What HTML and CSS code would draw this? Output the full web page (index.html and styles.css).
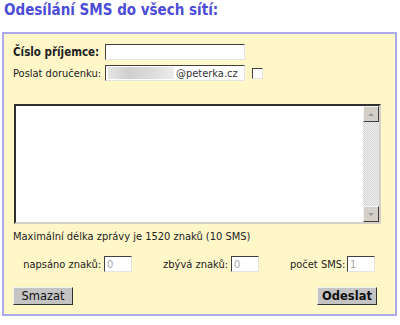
FILE: index.html
```html
<!DOCTYPE html>
<html lang="cs">
<head>
    <meta charset="UTF-8">
    <title>Odesílání SMS</title>
    <link rel="stylesheet" href="styles.css">
</head>
<body>
    <h1 class="title">Odesílání SMS do všech sítí:</h1>
    <div class="sms-box">
        <div class="field-row">
            <label class="label-strong" for="cislo">Číslo příjemce:</label>
            <input class="text-input" type="text" id="cislo">
        </div>
        <div class="field-row">
            <label for="dorucenka">Poslat doručenku:</label>
            <div class="text-input email-input">
                <span class="email-blur"></span>
                <span class="email-domain">@peterka.cz</span>
            </div>
            <input class="check" type="checkbox" id="dorucenka">
        </div>
        <div class="message-wrap">
            <textarea class="message" id="zprava"></textarea>
            <div class="scrollbar">
                <div class="sb-button"><span class="arrow-up"></span></div>
                <div class="sb-track"></div>
                <div class="sb-button"><span class="arrow-down"></span></div>
            </div>
        </div>
        <p class="info">Maximální délka zprávy je 1520 znaků (10 SMS)</p>
        <div class="counters">
            <div class="counter counter-written">
                <span>napsáno znaků:</span>
                <input class="count-input" type="text" value="0" disabled>
            </div>
            <div class="counter counter-left">
                <span>zbývá znaků:</span>
                <input class="count-input" type="text" value="0" disabled>
            </div>
            <div class="counter counter-sms">
                <span>počet SMS:</span>
                <input class="count-input" type="text" value="1" disabled>
            </div>
        </div>
        <div class="buttons">
            <button class="btn">Smazat</button>
            <button class="btn btn-send">Odeslat</button>
        </div>
    </div>
</body>
</html>
```

FILE: styles.css
```css
body {
    margin: 0;
    padding: 0;
    background-color: #fff;
    font-family: 'DejaVu Sans Condensed', 'DejaVu Sans', sans-serif;
    font-size: 11px;
    color: #222;
}
.title {
    margin: 0;
    padding: 1px 4px 0 4px;
    height: 32px;
    box-sizing: border-box;
    font-size: 15px;
    font-weight: bold;
    color: #4c4cd8;
}
.sms-box {
    width: 395px;
    height: 284px;
    box-sizing: border-box;
    margin-left: 2px;
    border: 2px solid #a9a9ec;
    background-color: #fff7c8;
    padding: 10px 0 0 9px;
    display: flex;
    flex-direction: column;
}
.field-row {
    display: flex;
    align-items: center;
    height: 16px;
    margin-bottom: 5px;
}
.field-row label {
    width: 92px;
    flex-shrink: 0;
}
.label-strong {
    font-weight: bold;
    font-size: 11.5px;
}
.text-input {
    width: 140px;
    height: 16px;
    box-sizing: border-box;
    margin: 0;
    padding: 0 2px;
    border: 1px solid;
    border-color: #404040 #e4e4e4 #e4e4e4 #404040;
    background: #fff;
    font-family: inherit;
    font-size: 11px;
}
.email-input {
    display: flex;
    align-items: center;
}
.email-blur {
    width: 66px;
    height: 12px;
    margin-right: 2px;
    background: linear-gradient(90deg, #e6e6e6, #cfcfcf 30%, #d9d9d9 60%, #ececec);
}
.email-domain {
    color: #333;
}
.check {
    appearance: none;
    width: 11px;
    height: 11px;
    margin: 0 0 0 7px;
    border: 1px solid;
    border-color: #404040 #e4e4e4 #e4e4e4 #404040;
    background: #fff;
}
.message-wrap {
    display: flex;
    width: 367px;
    height: 120px;
    box-sizing: border-box;
    margin: 18px 0 0 1px;
    border: 2px solid;
    border-color: #303030 #d4d0c8 #d4d0c8 #303030;
    background: #fff;
}
.message {
    flex: 1;
    border: none;
    margin: 0;
    padding: 2px;
    resize: none;
    outline: none;
    font-family: inherit;
}
.scrollbar {
    width: 16px;
    display: flex;
    flex-direction: column;
}
.sb-button {
    height: 16px;
    box-sizing: border-box;
    background: #d4d0c8;
    border: 1px solid;
    border-color: #f4f4f4 #404040 #404040 #f4f4f4;
    display: flex;
    align-items: center;
    justify-content: center;
}
.sb-track {
    flex: 1;
    background-color: #e6e6e6;
    background-image: repeating-conic-gradient(#d6d6d6 0 25%, #efefef 0 50%);
    background-size: 2px 2px;
}
.arrow-up, .arrow-down {
    width: 0;
    height: 0;
    border-left: 3px solid transparent;
    border-right: 3px solid transparent;
}
.arrow-up {
    border-bottom: 3px solid #9a9a9a;
}
.arrow-down {
    border-top: 3px solid #9a9a9a;
}
.info {
    margin: 6px 0 0 0;
    line-height: 13px;
}
.counters {
    display: flex;
    align-items: center;
    margin-top: 13px;
    height: 16px;
}
.counter {
    display: flex;
    align-items: center;
    flex-shrink: 0;
    white-space: nowrap;
}
.counter span {
    box-sizing: border-box;
    text-align: right;
    padding-right: 3px;
}
.counter-written {
    margin-left: 10px;
}
.counter-written span {
    width: 81px;
}
.counter-left {
    margin-left: 30px;
}
.counter-left span {
    width: 69px;
}
.counter-sms {
    margin-left: 31px;
}
.counter-sms span {
    width: 57px;
}
.count-input {
    width: 28px;
    height: 16px;
    box-sizing: border-box;
    margin: 0;
    padding: 0 2px;
    border: 1px solid;
    border-color: #404040 #e4e4e4 #e4e4e4 #404040;
    background: #fff;
    color: #a8a8a8;
    font-family: inherit;
    font-size: 11px;
}
.buttons {
    display: flex;
    justify-content: space-between;
    width: 364px;
    margin-top: 15px;
}
.btn {
    width: 60px;
    height: 18px;
    padding: 0;
    background: #c4c4c4;
    border: 1px solid;
    border-color: #f0f0f0 #303030 #303030 #f0f0f0;
    font-family: 'DejaVu Sans', sans-serif;
    font-size: 11.5px;
    color: #111;
    cursor: pointer;
}
.btn-send {
    font-weight: bold;
}
```
